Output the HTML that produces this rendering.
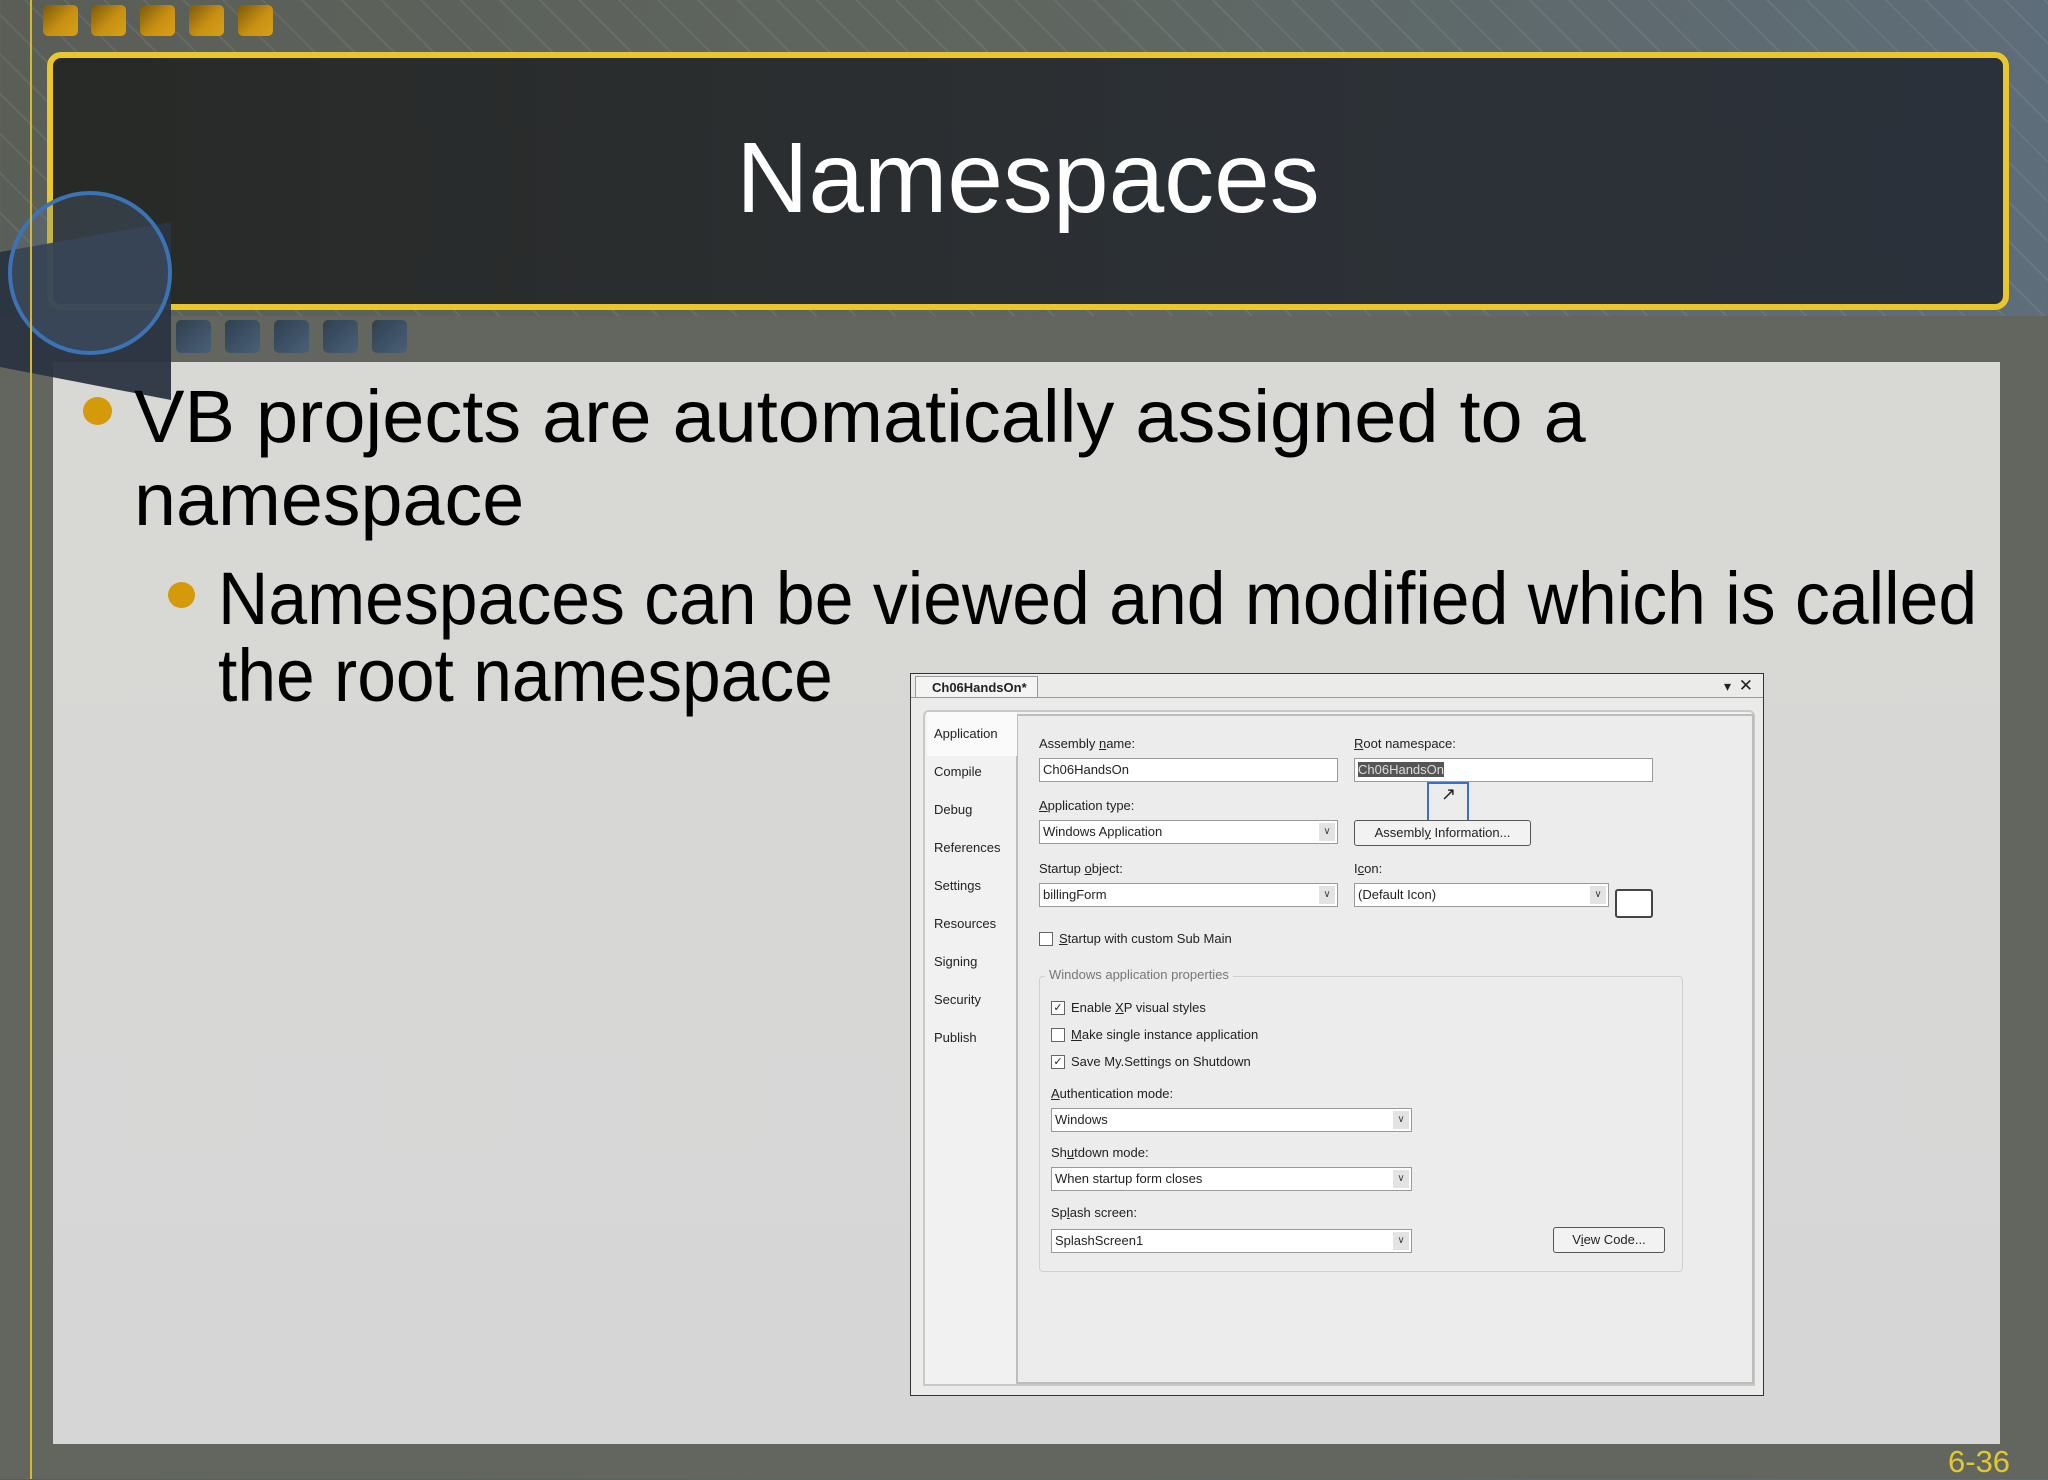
<!DOCTYPE html>
<html><head><meta charset="utf-8"><style>
*{margin:0;padding:0;box-sizing:border-box}
body{width:2048px;height:1479px;overflow:hidden;position:relative;font-family:"Liberation Sans",Arial,sans-serif;
background:linear-gradient(100deg,#5a5e57 0%,#5f6660 45%,#5d6f80 100%);}
.abs{position:absolute}
.stripes{left:0;top:0;width:2048px;height:330px;background:repeating-linear-gradient(45deg,rgba(255,255,255,0) 0 26px,rgba(255,255,255,.07) 26px 28px)}
.lower{left:0;top:316px;width:2048px;height:1163px;background:#62665e}
.gsq{width:35px;height:31px;top:5px;border-radius:5px;background:linear-gradient(135deg,#7a5a08,#c89012 55%,#d9a018)}
.bsq{width:35px;height:33px;top:320px;border-radius:5px;background:linear-gradient(135deg,#2f4050,#4a6078)}
.title{left:47px;top:52px;width:1962px;height:258px;border:6px solid #e8c62c;border-radius:14px;background:#2a2c2b;
background:linear-gradient(90deg,#282a27,#2c3137 70%,#2b313a)}
.title span{position:absolute;left:0;right:0;top:70px;text-align:center;color:#fff;font-size:100px;line-height:100px}
.panel{left:53px;top:362px;width:1947px;height:1082px;background:linear-gradient(180deg,#d8d9d5,#d6d6d6)}
.t{color:#000;font-size:74px;white-space:nowrap;line-height:1;transform-origin:0 0}
.dot{border-radius:50%;background:#d49a0a}
.dlg{left:910px;top:673px;width:854px;height:723px;background:#ebebea;border:1px solid #333;font-size:13px;color:#222}
.d{position:absolute;white-space:nowrap}
.f{position:absolute;background:#fff;border:1px solid #9a9a9a;height:24px;padding:3px 3px;font-size:13px}
.arr{position:absolute;right:2px;top:2px;width:16px;height:18px;background:#e3e3e3;font-size:10px;text-align:center;line-height:18px;color:#444}
.btn{position:absolute;background:#f2f2f2;border:1px solid #555;border-radius:3px;text-align:center;line-height:24px;height:26px}
.cb{position:absolute;width:14px;height:14px;border:1px solid #666;background:#fff;font-size:11px;line-height:12px;text-align:center}
.tab{position:absolute;font-size:13px}
</style></head><body>
<div class="abs stripes"></div>
<div class="abs lower"></div>
<div class="abs gsq" style="left:43px"></div><div class="abs gsq" style="left:91px"></div><div class="abs gsq" style="left:140px"></div><div class="abs gsq" style="left:189px"></div><div class="abs gsq" style="left:238px"></div>
<div class="abs title"><span>Namespaces</span></div>
<div class="abs bsq" style="left:176px"></div><div class="abs bsq" style="left:225px"></div><div class="abs bsq" style="left:274px"></div><div class="abs bsq" style="left:323px"></div><div class="abs bsq" style="left:372px"></div>
<div class="abs panel"></div>
<svg class="abs" style="left:0;top:0" width="200" height="420">
<polygon points="0,252 171,222 171,400 0,367" fill="#2a3440" opacity=".95"/>
<circle cx="90" cy="273" r="80" fill="rgba(90,120,150,.25)" stroke="#3a74b4" stroke-width="4"/>
</svg>
<div class="abs" style="left:30px;top:0;width:2px;height:1479px;background:#d8b82a"></div>
<div class="abs dot" style="left:83px;top:397px;width:29px;height:28px"></div>
<div class="abs t" style="left:134px;top:380px;transform:scaleX(1.023)">VB projects are automatically assigned to a</div>
<div class="abs t" style="left:134px;top:463px;transform:scaleX(1.02)">namespace</div>
<div class="abs dot" style="left:168px;top:582px;width:27px;height:26px"></div>
<div class="abs t" style="left:218px;top:562px;transform:scaleX(0.942)">Namespaces can be viewed and modified which is called</div>
<div class="abs t" style="left:218px;top:639px;transform:scaleX(0.94)">the root namespace</div>
<div class="abs" style="left:1948px;top:1444px;color:#e0c830;font-size:31px">6-36</div>

<div class="abs dlg">
 <div class="d" style="left:4px;top:2px;width:123px;height:22px;background:#f4f4f4;border:1px solid #999;border-bottom:none;font-weight:bold;font-size:13px;padding:3px 0 0 16px">Ch06HandsOn*</div>
 <div class="d" style="left:0;top:23px;width:852px;height:1px;background:#999"></div>
 <div class="d" style="right:32px;top:4px;font-size:14px">&#9662;</div>
 <div class="d" style="right:10px;top:2px;font-size:17px">&#10005;</div>
 <div class="d" style="left:12px;top:36px;width:832px;height:676px;border:2px solid #c8c8c8;background:#f1f1f1;border-radius:6px 6px 0 0"></div>
 <div class="d" style="left:105px;top:40px;width:738px;height:670px;border:2px solid #bdbdbd;background:#ececec"></div>
 <div class="d" style="left:16px;top:38px;width:90px;height:44px;background:#fafafa"></div>
 <div class="tab" style="left:23px;top:52px">Application</div>
 <div class="tab" style="left:23px;top:90px">Compile</div>
 <div class="tab" style="left:23px;top:128px">Debug</div>
 <div class="tab" style="left:23px;top:166px">References</div>
 <div class="tab" style="left:23px;top:204px">Settings</div>
 <div class="tab" style="left:23px;top:242px">Resources</div>
 <div class="tab" style="left:23px;top:280px">Signing</div>
 <div class="tab" style="left:23px;top:318px">Security</div>
 <div class="tab" style="left:23px;top:356px">Publish</div>
 <div class="d" style="left:128px;top:62px">Assembly <u>n</u>ame:</div>
 <div class="f" style="left:128px;top:84px;width:299px">Ch06HandsOn</div>
 <div class="d" style="left:443px;top:62px"><u>R</u>oot namespace:</div>
 <div class="f" style="left:443px;top:84px;width:299px"><span style="background:#555;color:#ddd">Ch06HandsOn</span></div>
 <div class="d" style="left:516px;top:108px;width:42px;height:40px;border:2px solid #3a6fc4"></div>
 <div class="d" style="left:530px;top:110px;font-size:18px">&#8599;</div>
 <div class="d" style="left:128px;top:124px"><u>A</u>pplication type:</div>
 <div class="f" style="left:128px;top:146px;width:299px">Windows Application<div class="arr">&#8744;</div></div>
 <div class="btn" style="left:443px;top:146px;width:177px">Assembl<u>y</u> Information...</div>
 <div class="d" style="left:128px;top:187px">Startup <u>o</u>bject:</div>
 <div class="f" style="left:128px;top:209px;width:299px">billingForm<div class="arr">&#8744;</div></div>
 <div class="d" style="left:443px;top:187px">I<u>c</u>on:</div>
 <div class="f" style="left:443px;top:209px;width:255px">(Default Icon)<div class="arr">&#8744;</div></div>
 <div class="d" style="left:704px;top:215px;width:38px;height:29px;border:2px solid #444;border-radius:3px;background:#fff"></div>
 <div class="cb" style="left:128px;top:258px"></div>
 <div class="d" style="left:148px;top:257px"><u>S</u>tartup with custom Sub Main</div>
 <div class="d" style="left:128px;top:302px;width:644px;height:296px;border:1px solid #d0d0d0;border-radius:4px"></div>
 <div class="d" style="left:134px;top:293px;background:#ececec;padding:0 4px;color:#777">Windows application properties</div>
 <div class="cb" style="left:140px;top:327px">&#10003;</div><div class="d" style="left:160px;top:326px">Enable <u>X</u>P visual styles</div>
 <div class="cb" style="left:140px;top:354px"></div><div class="d" style="left:160px;top:353px"><u>M</u>ake single instance application</div>
 <div class="cb" style="left:140px;top:381px">&#10003;</div><div class="d" style="left:160px;top:380px">Save My.Settings on Shutdown</div>
 <div class="d" style="left:140px;top:412px"><u>A</u>uthentication mode:</div>
 <div class="f" style="left:140px;top:434px;width:361px">Windows<div class="arr">&#8744;</div></div>
 <div class="d" style="left:140px;top:471px">Sh<u>u</u>tdown mode:</div>
 <div class="f" style="left:140px;top:493px;width:361px">When startup form closes<div class="arr">&#8744;</div></div>
 <div class="d" style="left:140px;top:531px">Sp<u>l</u>ash screen:</div>
 <div class="f" style="left:140px;top:555px;width:361px">SplashScreen1<div class="arr">&#8744;</div></div>
 <div class="btn" style="left:642px;top:553px;width:112px">V<u>i</u>ew Code...</div>
</div>
</body></html>
